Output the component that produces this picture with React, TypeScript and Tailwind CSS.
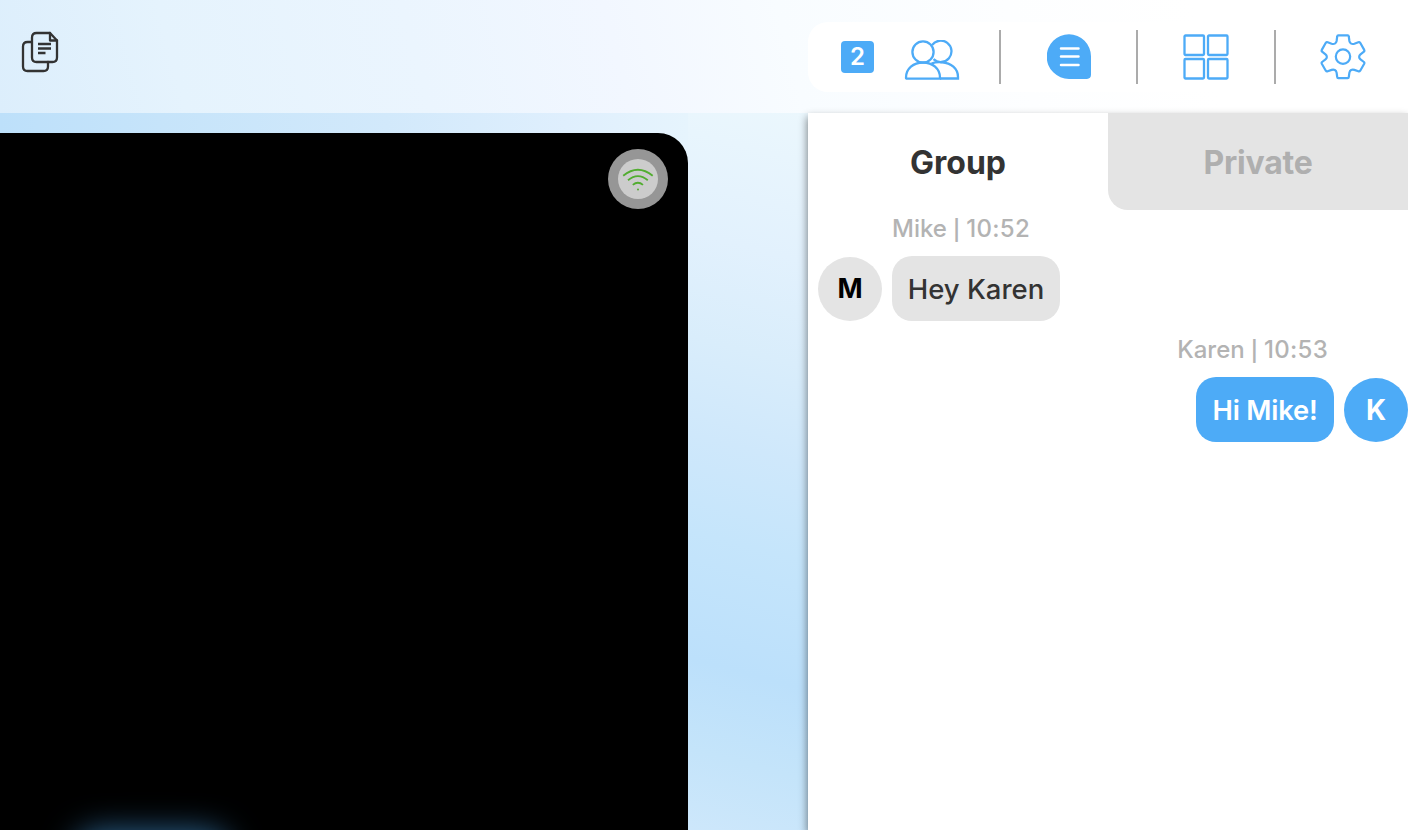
import React from "react";

const divider = "h-[54px] w-[2px] shrink-0 bg-[#ababab]";

function CopyIcon() {
  return (
    <svg className="h-[42px] w-[38px]" viewBox="0 0 38 42" fill="none" stroke="#333" strokeWidth="2.300" strokeLinecap="round" strokeLinejoin="round">
      <path d="M10.500 11H6.500Q2 11 2 15.500V35.500Q2 40 6.500 40H22.500Q27 40 27 35.500V31" />
      <path d="M15.500 2H29L36 9.500V26.500Q36 31 31.500 31H15.500Q11 31 11 26.500V6.500Q11 2 15.500 2Z" />
      <path d="M29 2V9.500H36" />
      <path d="M17 13H30M17 17.500H30M17 22H24.500" strokeLinecap="butt" />
    </svg>
  );
}

function PeopleIcon() {
  return (
    <svg className="h-[42px] w-[56px]" viewBox="0 0 56 42" fill="none" stroke="#4dabf7" strokeWidth="2.300">
      <path d="M28 5.200A10.700 10.700 0 1 1 29.500 19.200" />
      <path d="M27.500 23.500C31 22.200 34 21.800 38 22.300C47 22.800 54 28.500 54 37V38.500H36" />
      <circle cx="19" cy="12" r="10.600" />
      <path d="M3 38.700Q2 38.700 2 37.700C2 28.700 9.500 22.500 19 22.500S36 28.700 36 37.700V38.700Z" />
    </svg>
  );
}

function ChatIcon() {
  return (
    <svg className="h-[45px] w-[45px]" viewBox="0 0 45 45">
      <path d="M22 .3A22 22 0 0 0 22 44.900H39.900Q44 44.900 44 40.800V22.300A22 22 0 0 0 22 .3Z" fill="#4dabf7" />
      <path d="M14 14.400H31.500M14 22.600H31.500M14 30.900H31.500" stroke="#fff" strokeWidth="2.500" strokeLinecap="round" />
    </svg>
  );
}

function GridIcon() {
  return (
    <svg className="h-[46px] w-[46px]" viewBox="0 0 46 46" fill="none" stroke="#4dabf7" strokeWidth="2.300">
      <rect x="1.500" y="1.500" width="19.500" height="19.500" rx="1" />
      <rect x="25" y="1.500" width="19.500" height="19.500" rx="1" />
      <rect x="1.500" y="25" width="19.500" height="19.500" rx="1" />
      <rect x="25" y="25" width="19.500" height="19.500" rx="1" />
    </svg>
  );
}

function GearIcon() {
  return (
    <svg className="h-[46px] w-[46px]" viewBox="0 0 46 46" fill="none" stroke="#4dabf7" strokeWidth="2.200" strokeLinejoin="round">
      <path d="M18.300 1.300H27.700Q28.700 1.300 28.800 2.500L29.400 7C29.900 9.600 31.900 10.500 34.400 9.700L38.300 8.200Q39.500 7.800 40.200 8.800L44.200 15.900Q44.700 16.900 43.900 17.700L40.500 20.400C38.700 21.900 38.700 24 40.500 25.400L43.900 28Q44.700 28.800 44.200 29.800L40.200 36.700Q39.500 37.700 38.300 37.300L34.400 35.900C31.900 35.100 29.900 36 29.400 38.600L28.800 43Q28.700 44.200 27.700 44.200H18.300Q17.300 44.200 17.200 43L16.600 38.600C16.100 36 14.100 35.100 11.600 35.900L7.700 37.300Q6.500 37.700 5.800 36.700L1.800 29.800Q1.300 28.800 2.100 28L5.500 25.400C7.300 24 7.300 21.900 5.500 20.400L2.100 17.700Q1.300 16.900 1.800 15.900L5.800 8.800Q6.500 7.800 7.700 8.200L11.600 9.700C14.100 10.500 16.100 9.600 16.600 7L17.200 2.500Q17.300 1.300 18.300 1.300Z" />
      <circle cx="23" cy="22.600" r="7.200" />
    </svg>
  );
}

function WifiIcon() {
  return (
    <svg className="h-10 w-10" viewBox="0 0 40 40" fill="none" stroke="#52ad30" strokeWidth="1.800">
      <path d="M5.200 16.800Q19.900 4.600 34.700 16.800M10 21.300Q19.900 13 29.800 21.300M14.800 25.900Q19.900 21.600 25 25.900" />
      <circle cx="20" cy="30.600" r="1" fill="#52ad30" stroke="none" />
    </svg>
  );
}

export default function App() {
  return (
    <div className="flex h-[830px] w-[1408px] flex-col overflow-hidden bg-white font-['Inter',sans-serif]">
      <header className="flex h-[113px] shrink-0 justify-between bg-[linear-gradient(75deg,#dceefc_0%,#e5f3fd_13%,#ebf5fe_30%,#f2f7ff_44%,#f8fcff_56%,#fdfeff_72%,#fff_85%)]">
        <button className="ml-[21px] mt-[31px] h-[42px]" aria-label="Copy"><CopyIcon /></button>
        <nav className="mt-[22px] flex h-[70px] w-[600px] items-center rounded-l-[20px] bg-white pl-[33px]">
          <span className="flex h-8 w-[33px] items-center justify-center rounded-[4px] bg-[#4dabf7] text-2xl font-semibold text-white">2</span>
          <button className="ml-[30px] mt-[8px]" aria-label="Participants"><PeopleIcon /></button>
          <span className={"ml-[39px] " + divider} />
          <button className="-mt-px ml-[46px]" aria-label="Chat"><ChatIcon /></button>
          <span className={"ml-[44px] " + divider} />
          <button className="ml-[45px]" aria-label="Layout"><GridIcon /></button>
          <span className={"ml-[45px] " + divider} />
          <button className="-mt-px ml-[44px]" aria-label="Settings"><GearIcon /></button>
        </nav>
      </header>
      <div className="flex min-h-0 flex-1">
        <main className="flex flex-1 bg-[linear-gradient(90deg,#bde0fa_0%,#c6e4fa_20%,#d2e9fb_48%,#dfeffd_70%,#e6f4fd_85%,#eaf7fd_100%)]">
          <section className="relative mt-5 w-[688px] overflow-hidden rounded-tr-[30px] bg-black">
            <div className="ml-auto mr-5 mt-4 flex h-[60px] w-[60px] items-center justify-center rounded-full bg-[#969696]">
              <div className="h-10 w-10 rounded-full bg-[#ccc]"><WifiIcon /></div>
            </div>
            <div className="absolute left-[80px] top-[704px] h-10 w-[144px] rounded-full shadow-[0_0_32px_6px_rgba(77,171,247,0.6)]" />
          </section>
          <div className="w-[120px] bg-[linear-gradient(195deg,#ebf7fd_0%,#e2f1fd_20%,#d9edfb_34%,#cfe8fb_47%,#c5e5fb_60%,#bce0fb_77%,#c4e4fa_89%,#cde7fb_100%)]" />
        </main>
        <aside className="relative w-[600px] bg-white shadow-[-1px_4px_8px_rgba(0,0,0,0.45)]">
          <div className="flex h-[97px] text-[32px] font-bold">
            <button className="w-[300px] pt-[2px] text-[#333]">Group</button>
            <button className="w-[300px] rounded-bl-[20px] bg-[#e4e4e4] pt-[2px] tracking-[-0.2px] text-[#afafaf]">Private</button>
          </div>
          <div className="pl-[10px]">
            <div className="flex h-[46px] items-center pb-[8px] pl-[74px] text-2xl font-medium text-[#b3b3b3]">Mike <span className="relative top-px mx-[6px] text-[20px] font-semibold">|</span><span className="tracking-[0.3px]"> 10:52</span></div>
            <div className="flex items-end gap-[10px]">
              <span className="flex h-16 w-16 items-center justify-center rounded-full bg-[#e4e4e4] pt-px text-[27px] font-bold text-black">M</span>
              <span className="flex h-[65px] w-[168px] items-center justify-center rounded-[20px] bg-[#e4e4e4] pt-[3px] text-[27.500px] font-medium text-[#333]">Hey Karen</span>
            </div>
            <div className="mt-[10px] flex h-[46px] items-center justify-end pb-[8px] pr-[80px] text-2xl font-medium text-[#b3b3b3]">Karen <span className="relative top-px mx-[6px] text-[20px] font-semibold">|</span><span className="tracking-[0.3px]"> 10:53</span></div>
            <div className="flex items-end justify-end gap-[10px]">
              <span className="flex h-[65px] w-[138px] items-center justify-center rounded-[20px] bg-[#4dabf7] pt-[3px] text-[27.300px] font-semibold tracking-[-0.2px] text-white">Hi Mike!</span>
              <span className="flex h-16 w-16 items-center justify-center rounded-full bg-[#4dabf7] text-[28px] font-bold text-white">K</span>
            </div>
          </div>
        </aside>
      </div>
    </div>
  );
}
